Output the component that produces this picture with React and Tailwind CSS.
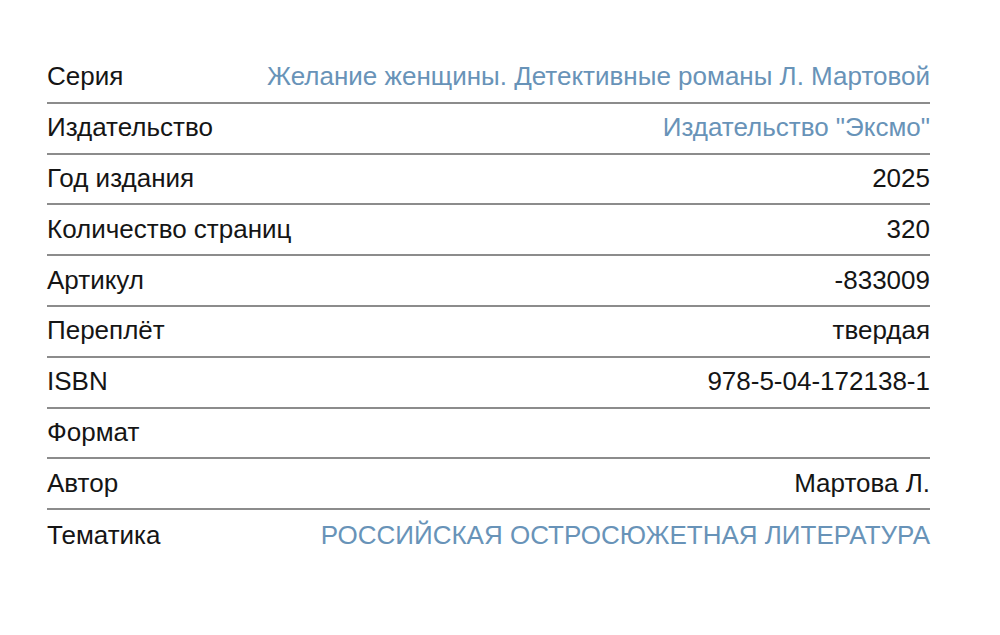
const rows = [
  { label: "Серия", value: "Желание женщины. Детективные романы Л. Мартовой", link: true },
  { label: "Издательство", value: 'Издательство "Эксмо"', link: true },
  { label: "Год издания", value: "2025" },
  { label: "Количество страниц", value: "320" },
  { label: "Артикул", value: "-833009" },
  { label: "Переплёт", value: "твердая" },
  { label: "ISBN", value: "978-5-04-172138-1" },
  { label: "Формат", value: "" },
  { label: "Автор", value: "Мартова Л." },
  { label: "Тематика", value: "РОССИЙСКАЯ ОСТРОСЮЖЕТНАЯ ЛИТЕРАТУРА", link: true },
];

export default function App() {
  return (
    <div className="min-h-[635px] bg-white pt-[53px] pl-[47px] font-['Liberation_Sans',Arial,sans-serif]">
      <div className="w-[883px]">
        {rows.map((row, i) => (
          <div
            key={row.label}
            className={
              i < rows.length - 1
                ? "flex h-[50.8px] items-center justify-between border-b-2 border-[#8c8c8c] pb-[2px] text-[26px] leading-none"
                : "flex h-[50.8px] items-center justify-between pb-[2px] text-[26px] leading-none"
            }
          >
            <span className="text-[#151515]">{row.label}</span>
            <span className={row.link ? "text-[#6893b8]" : "text-[#151515]"}>{row.value}</span>
          </div>
        ))}
      </div>
    </div>
  );
}
